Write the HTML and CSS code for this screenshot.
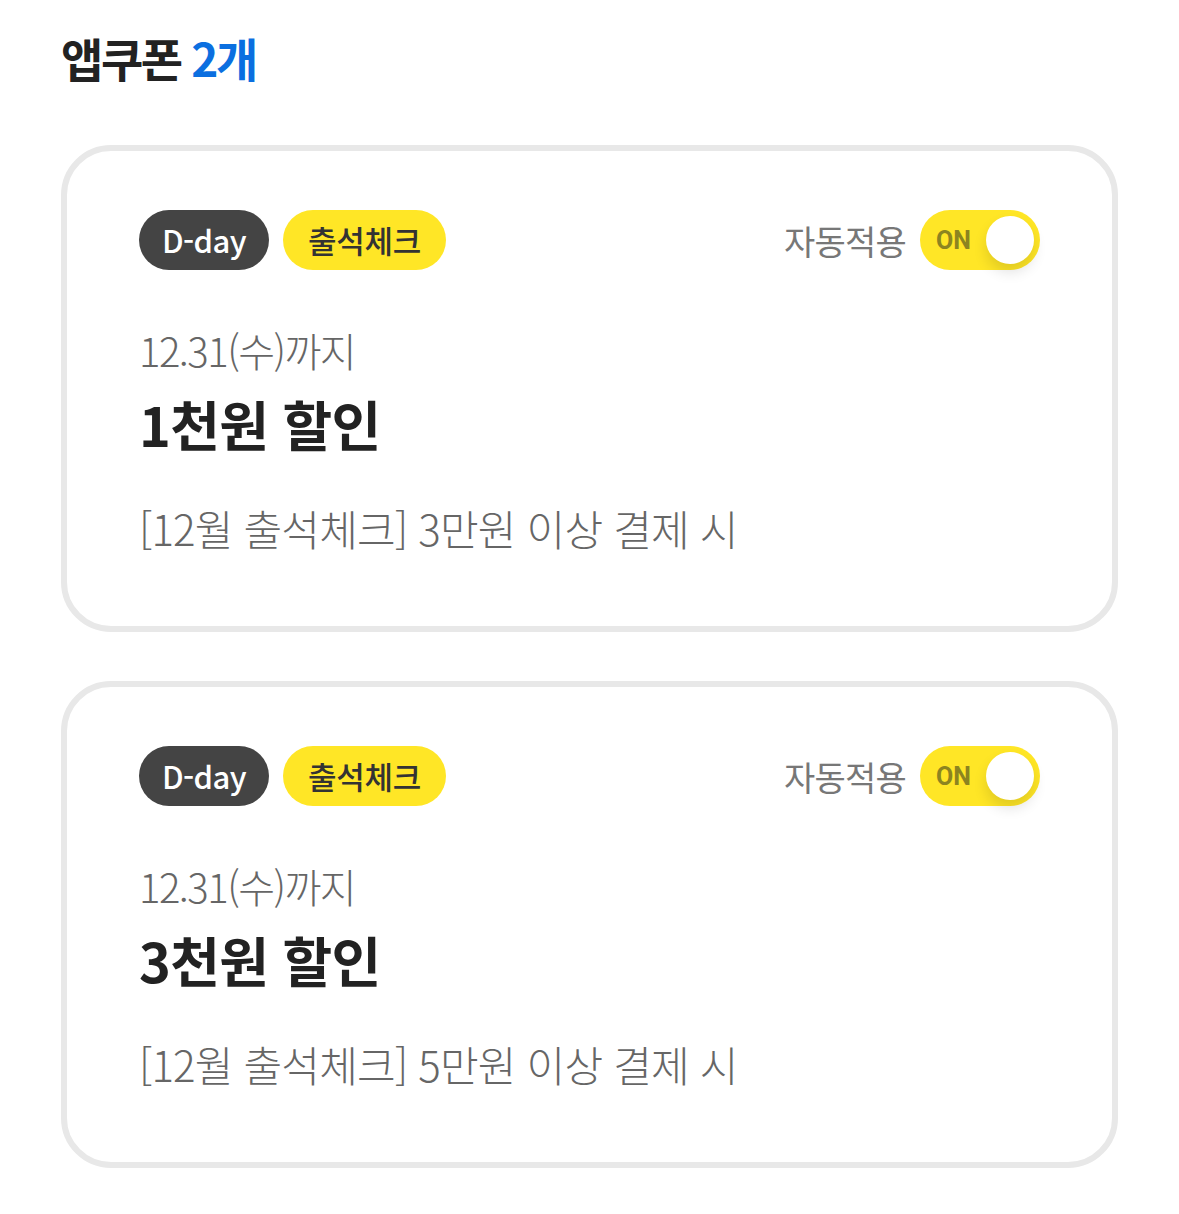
FILE: index.html
```html
<!DOCTYPE html>
<html lang="ko">
<head>
    <meta charset="UTF-8">
    <meta name="viewport" content="width=device-width, initial-scale=1.0">
    <title>앱쿠폰</title>
    <link rel="stylesheet" href="styles.css">
</head>
<body>

<div class="page">
    <h1 class="page-title">앱쿠폰 <span class="count">2개</span></h1>

    <div class="coupon-list">
        <div class="coupon">
            <div class="coupon-top">
                <div class="tags">
                    <span class="tag tag-dark">D-day</span>
                    <span class="tag tag-yellow">출석체크</span>
                </div>
                <div class="auto">
                    <span class="auto-label">자동적용</span>
                    <span class="toggle"><span class="toggle-text">ON</span><span class="knob"></span></span>
                </div>
            </div>
            <p class="coupon-date">12.31(수)까지</p>
            <p class="coupon-title">1천원 할인</p>
            <p class="coupon-desc">[12월 출석체크] 3만원 이상 결제 시</p>
        </div>

        <div class="coupon">
            <div class="coupon-top">
                <div class="tags">
                    <span class="tag tag-dark">D-day</span>
                    <span class="tag tag-yellow">출석체크</span>
                </div>
                <div class="auto">
                    <span class="auto-label">자동적용</span>
                    <span class="toggle"><span class="toggle-text">ON</span><span class="knob"></span></span>
                </div>
            </div>
            <p class="coupon-date">12.31(수)까지</p>
            <p class="coupon-title">3천원 할인</p>
            <p class="coupon-desc">[12월 출석체크] 5만원 이상 결제 시</p>
        </div>
    </div>
</div>

</body>
</html>
```

FILE: styles.css
```css
body {
    font-family: "Noto Sans CJK KR", "Noto Sans", sans-serif;
    background-color: #fff;
    margin: 0;
    padding: 0;
}
.page {
    padding: 27px 61px 0 61px;
}
.page-title {
    margin: 0;
    font-size: 46px;
    font-weight: 700;
    color: #222;
    letter-spacing: -2.4px;
    line-height: 60px;
}
.count {
    color: #0b6fe0;
}
.coupon-list {
    margin-top: 58px;
    display: flex;
    flex-direction: column;
    gap: 49px;
}
.coupon {
    border: 6px solid #e8e8e8;
    border-radius: 50px;
    padding: 59px 72px 0 72px;
    height: 487px;
    box-sizing: border-box;
}
.coupon-top {
    display: flex;
    justify-content: space-between;
    align-items: center;
}
.tags {
    display: flex;
    gap: 14px;
}
.tag {
    height: 60px;
    line-height: 60px;
    border-radius: 30px;
    font-size: 31px;
    font-weight: 500;
    padding: 0 23px;
    letter-spacing: -0.3px;
}
.tag-dark {
    background-color: #444;
    color: #fff;
    letter-spacing: -0.6px;
}
.tag-yellow {
    background-color: #ffe626;
    color: #333;
    padding: 0 25px;
}
.auto {
    display: flex;
    align-items: center;
    gap: 14px;
}
.auto-label {
    font-size: 34px;
    color: #777;
    letter-spacing: -0.8px;
}
.toggle {
    position: relative;
    width: 120px;
    height: 60px;
    border-radius: 30px;
    background-color: #ffe626;
    display: flex;
    align-items: center;
}
.toggle-text {
    font-family: Roboto, sans-serif;
    font-weight: 700;
    font-size: 25px;
    color: #8c8420;
    margin-left: 16px;
}
.knob {
    position: absolute;
    right: 6px;
    top: 6px;
    width: 48px;
    height: 48px;
    border-radius: 50%;
    background-color: #fff;
    box-shadow: 0 8px 14px rgba(0, 0, 0, 0.12);
}
.coupon-date {
    margin: 52px 0 0 0;
    font-size: 40px;
    font-weight: 300;
    color: #666;
    letter-spacing: -1.5px;
    line-height: 56px;
}
.coupon-title {
    margin: 10px 0 0 0;
    font-size: 54px;
    font-weight: 700;
    color: #222;
    letter-spacing: -0.7px;
    line-height: 72px;
}
.coupon-desc {
    margin: 39px 0 0 0;
    font-size: 42px;
    font-weight: 300;
    color: #666;
    letter-spacing: -0.8px;
    line-height: 58px;
}
```
